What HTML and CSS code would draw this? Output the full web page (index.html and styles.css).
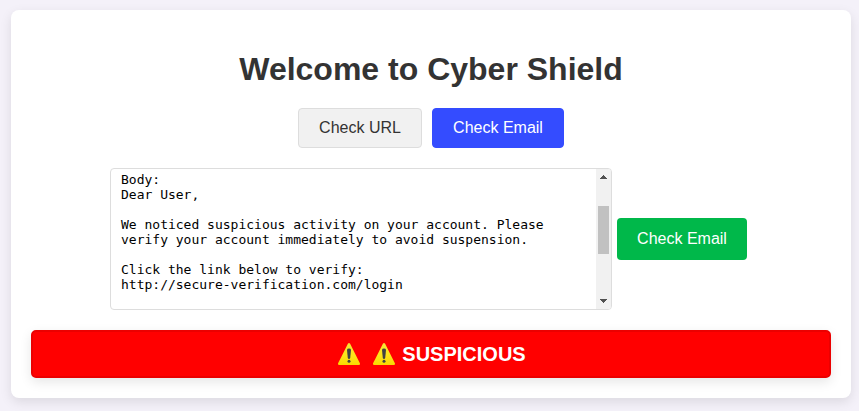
FILE: index.html
```html
<!DOCTYPE html>
<html lang="en">
<head>
<meta charset="utf-8">
<title>Cyber Shield</title>
<link rel="stylesheet" href="styles.css">
</head>
<body>
<svg width="0" height="0" class="defs" aria-hidden="true">
  <defs>
    <linearGradient id="warn" x1="0" y1="0" x2="0" y2="1"><stop offset="0" stop-color="#f5e536"/><stop offset=".55" stop-color="#fee51a"/><stop offset="1" stop-color="#f9d800"/></linearGradient>
    <symbol id="warning" viewBox="0 0 22 22">
      <path d="M9.9.8Q11 -.8 12.1.8L21.9 20.2Q22.4 21.8 20.9 21.9H1.1Q-.4 21.8.1 20.2Z" fill="url(#warn)"/>
      <path d="M9 6.9Q9.1 5.5 11 5.5T13 6.9L12.2 15Q11.9 15.9 11 15.9T9.8 15Z" fill="#424242"/>
      <circle cx="11" cy="18.2" r="1.5" fill="#424242"/>
    </symbol>
  </defs>
</svg>
<main class="card">
  <h1>Welcome to Cyber Shield</h1>
  <nav class="tabs">
    <button class="tab">Check URL</button>
    <button class="tab active">Check Email</button>
  </nav>
  <section class="form">
    <div class="field">
      <div class="message">Body:
Dear User,

We noticed suspicious activity on your account. Please
verify your account immediately to avoid suspension.

Click the link below to verify:
http://secure-verification.com/login</div>
      <div class="scrollbar">
        <svg class="arrow" viewBox="0 0 15 15" shape-rendering="crispEdges"><path d="M7 6h1v1h1v1h1v1h1v1H4V9h1V8h1V7h1z"/></svg>
        <div class="thumb"></div>
        <svg class="arrow" viewBox="0 0 15 15" shape-rendering="crispEdges"><path d="M4 5h7v1h-1v1H9v1H8v1H7V8H6V7H5V6H4z"/></svg>
      </div>
    </div>
    <button class="submit">Check Email</button>
  </section>
  <div class="result">
    <svg class="warning"><use href="#warning"/></svg>
    <svg class="warning second"><use href="#warning"/></svg>
    <span>SUSPICIOUS</span>
  </div>
</main>
</body>
</html>
```
FILE: styles.css
```css
* { box-sizing: border-box; }
body {
  margin: 0;
  padding: 10px 8px 13px 11px;
  height: 411px;
  overflow: hidden;
  background: #f4f1f9;
  font-family: "Liberation Sans", Arial, sans-serif;
  color: #333;
}
.defs { position: absolute; }
.card {
  height: 388px;
  padding: 40px 20px 20px;
  background: #fff;
  border-radius: 8px;
  box-shadow: 0 4px 12px rgba(0, 0, 0, .1);
}
h1 {
  margin: 0 0 20px;
  font-size: 32px;
  line-height: 38px;
  text-align: center;
}
button {
  font: 16px "Liberation Sans", Arial, sans-serif;
  padding: 0;
  border: 0;
  border-radius: 4px;
  color: #fff;
}
.tabs { display: flex; justify-content: center; gap: 10px; }
.tab {
  width: 124px;
  height: 40px;
  background: #f1f1f1;
  border: 1px solid #ddd;
  color: #333;
}
.tab.active { width: 132px; background: #344cff; border-color: #344cff; color: #fff; }
.form {
  display: flex;
  align-items: center;
  gap: 5px;
  margin: 20px 0 20px 79px;
}
.field {
  display: flex;
  width: 502px;
  height: 142px;
  border: 1px solid #ddd;
  border-radius: 4px;
  overflow: hidden;
}
.message {
  flex: 1;
  padding: 3px 10px;
  font: 13px/15px "DejaVu Sans Mono", monospace;
  color: #000;
  white-space: pre;
}
.scrollbar { width: 15px; display: flex; flex-direction: column; background: #f1f1f1; }
.arrow { width: 15px; height: 15px; fill: #505050; }
.thumb { width: 11px; height: 48px; margin: 22px 2px 40px; background: #c1c1c1; }
.submit { width: 130px; height: 42px; background: #00b84a; }
.result {
  display: flex;
  align-items: center;
  justify-content: center;
  height: 48px;
  padding-left: 2px;
  border: 2px solid #eb0000;
  border-radius: 5px;
  background: #f00;
  box-shadow: 0 4px 12px rgba(0, 0, 0, .1);
  color: #fff;
  font-size: 20px;
  font-weight: bold;
}
.warning { width: 22px; height: 22px; }
.second { margin: 0 7px 0 13px; }
```
